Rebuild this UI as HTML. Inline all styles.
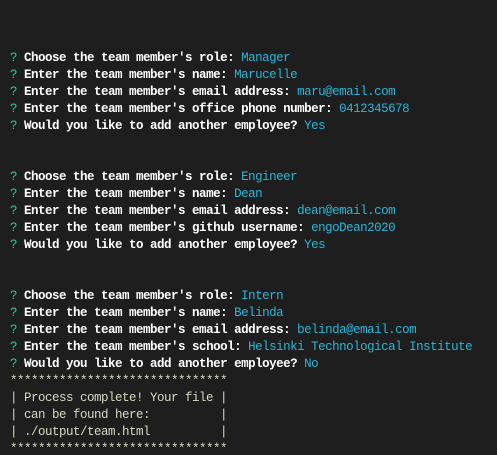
<!DOCTYPE html>
<html><head><style>
html,body{margin:0;padding:0;background:#1e1e1e;width:497px;height:455px;overflow:hidden}
pre{margin:0;padding:50px 0 0 10px;font-family:"Liberation Mono",monospace;font-size:12.5px;letter-spacing:-0.5px;line-height:17px;color:#cccccc}
.q{color:#23d18b}
.b{color:#ffffff;font-weight:bold}
.a{color:#29b8db}
.y{color:#d7d7c0}
</style></head><body><pre><span class="q">?</span> <span class="b">Choose the team member's role:</span> <span class="a">Manager</span>
<span class="q">?</span> <span class="b">Enter the team member's name:</span> <span class="a">Marucelle</span>
<span class="q">?</span> <span class="b">Enter the team member's email address:</span> <span class="a">maru@email.com</span>
<span class="q">?</span> <span class="b">Enter the team member's office phone number:</span> <span class="a">0412345678</span>
<span class="q">?</span> <span class="b">Would you like to add another employee?</span> <span class="a">Yes</span>


<span class="q">?</span> <span class="b">Choose the team member's role:</span> <span class="a">Engineer</span>
<span class="q">?</span> <span class="b">Enter the team member's name:</span> <span class="a">Dean</span>
<span class="q">?</span> <span class="b">Enter the team member's email address:</span> <span class="a">dean@email.com</span>
<span class="q">?</span> <span class="b">Enter the team member's github username:</span> <span class="a">engoDean2020</span>
<span class="q">?</span> <span class="b">Would you like to add another employee?</span> <span class="a">Yes</span>


<span class="q">?</span> <span class="b">Choose the team member's role:</span> <span class="a">Intern</span>
<span class="q">?</span> <span class="b">Enter the team member's name:</span> <span class="a">Belinda</span>
<span class="q">?</span> <span class="b">Enter the team member's email address:</span> <span class="a">belinda@email.com</span>
<span class="q">?</span> <span class="b">Enter the team member's school:</span> <span class="a">Helsinki Technological Institute</span>
<span class="q">?</span> <span class="b">Would you like to add another employee?</span> <span class="a">No</span>
<span class="y">*******************************
| Process complete! Your file |
| can be found here:          |
| ./output/team.html          |
*******************************</span></pre></body></html>
